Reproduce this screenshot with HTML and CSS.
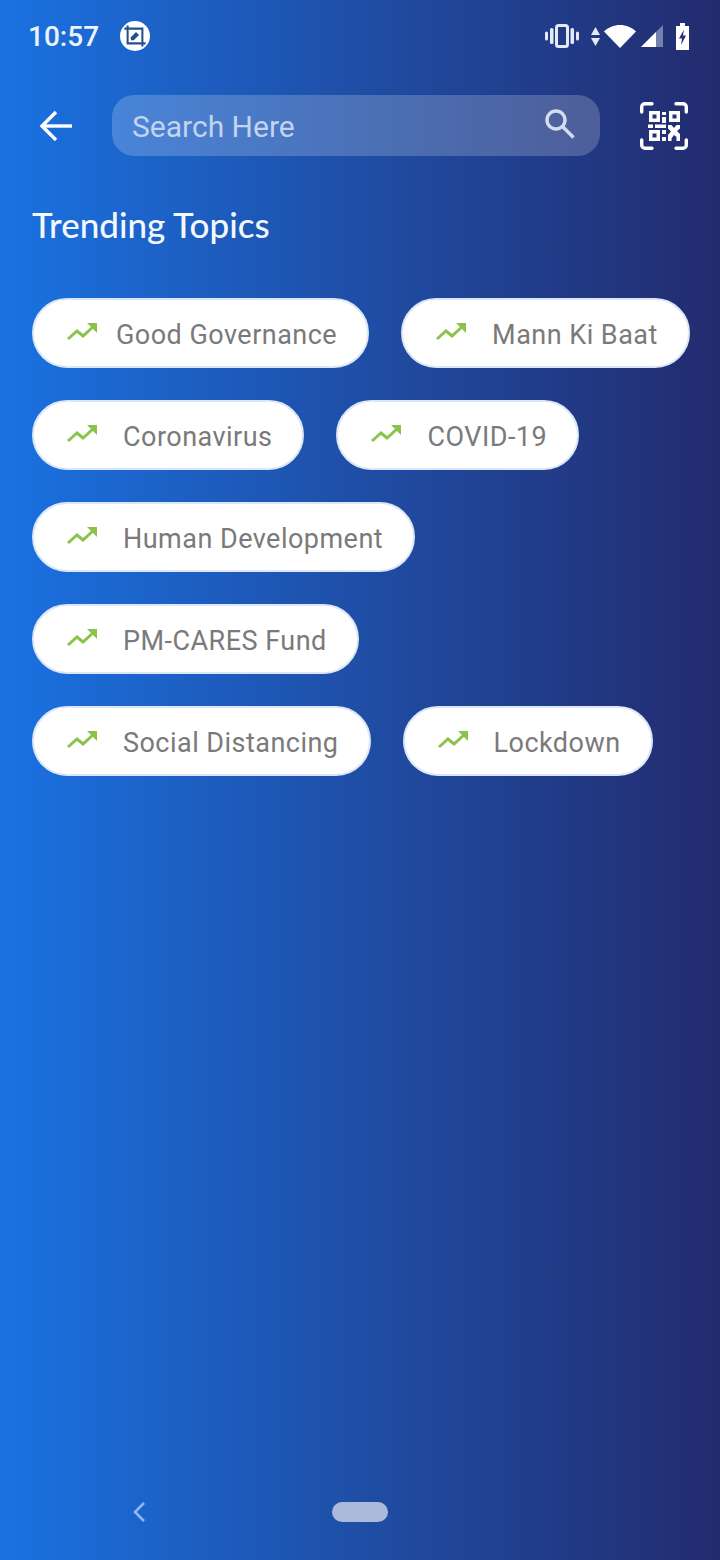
FILE: index.html
```html
<!DOCTYPE html>
<html lang="en">
<head>
<meta charset="UTF-8">
<meta name="viewport" content="width=device-width, initial-scale=1.0">
<title>Trending Topics</title>
<link rel="stylesheet" href="styles.css">
</head>
<body>
<div class="screen">
  <div class="status">
    <div class="status-left">
      <span class="time">10:57</span>
      <span class="notif">
        <svg width="24" height="24" viewBox="0 0 26 26" fill="none" stroke="#24508f" stroke-width="2.200">
          <path d="M5 1.500V21H24.500"/><path d="M1.500 5H21V24.500"/>
          <path d="M8.500 17.500v-3.200l5.600-5.600 3.200 3.200-5.600 5.600z" fill="#24508f" stroke="none"/>
        </svg>
      </span>
    </div>
    <div class="status-right">
      <svg width="34" height="24" viewBox="0 0 34 24" fill="#e4e9f5">
        <rect x="11.500" y="1.500" width="11" height="21" rx="2" fill="none" stroke="#e4e9f5" stroke-width="3"/>
        <rect x="5" y="4" width="3.500" height="16" rx="1.500"/>
        <rect x="25.500" y="4" width="3.500" height="16" rx="1.500"/>
        <rect x="0" y="7.500" width="3" height="9" rx="1.500"/>
        <rect x="31" y="7.500" width="3" height="9" rx="1.500"/>
      </svg>
      <svg class="ic-arrows" width="9" height="19" viewBox="0 0 9 19" fill="#e4e9f5">
        <path d="M4.500 0L9 8H0z"/><path d="M4.500 19L9 11H0z"/>
      </svg>
      <svg class="ic-wifi" width="32" height="23" viewBox="0 0 32 23" fill="#fff">
        <path d="M0 6.500C4 2.500 10 0 16 0s12 2.500 16 6.500L16 23z"/>
      </svg>
      <svg class="ic-signal" width="22" height="22" viewBox="0 0 22 22">
        <path d="M22 0v22H0z" fill="#7480ad"/>
        <path d="M15 7v15H0z" fill="#fff"/>
      </svg>
      <svg class="ic-batt" width="13" height="27" viewBox="0 0 13 27">
        <path d="M4 0h5v3h4v24H0V3h4z" fill="#fff"/>
        <path d="M8 6.500L3 15.500h3L5 22l5-9.500H7z" fill="#232e75"/>
      </svg>
    </div>
  </div>

  <div class="topbar">
    <svg class="back" width="34" height="32" viewBox="0 0 34 32" fill="none" stroke="#fff" stroke-width="3.400">
      <path d="M33 16H3"/><path d="M17 2L3 16l14 14"/>
    </svg>
    <div class="search">
      <span class="search-text">Search Here</span>
      <svg class="search-icon" width="32" height="32" viewBox="0 0 32 32" fill="none" stroke="#d5dcee" stroke-width="3.400">
        <circle cx="12" cy="12" r="9"/><path d="M18.500 18.500l11 11"/>
      </svg>
    </div>
    <svg class="qr" width="48" height="48" viewBox="0 0 48 48" fill="#fff">
      <g fill="none" stroke="#fff" stroke-width="3.400" stroke-linecap="round">
        <path d="M1.700 10V5a3.300 3.300 0 0 1 3.300-3.300H12"/>
        <path d="M36 1.700h7a3.300 3.300 0 0 1 3.300 3.300v5"/>
        <path d="M1.700 38v5a3.300 3.300 0 0 0 3.300 3.300H12"/>
        <path d="M36 46.300h7a3.300 3.300 0 0 0 3.300-3.300v-5"/>
      </g>
      <path fill-rule="evenodd" d="M9 9h11v11H9zM12.500 12.500v4h4v-4z"/>
      <path fill-rule="evenodd" d="M29 9h11v11H29zM32.500 12.500v4h4v-4z"/>
      <path fill-rule="evenodd" d="M9 28h11v11H9zM12.500 31.500v4h4v-4z"/>
      <rect x="22" y="10" width="4" height="3"/><rect x="22" y="15" width="4" height="6"/>
      <rect x="8" y="22.500" width="5" height="3.500"/><rect x="15" y="22.500" width="11" height="3.500"/>
      <rect x="22" y="28" width="4" height="4"/><rect x="22" y="35" width="4" height="4"/>
      <path d="M28 23h3.500l2.500 3 2.500-3H40v3.500l-3 2.500 3 3V39h-3.500v-4l-2.500-2-2.500 3.500V39H28v-6l3-3.500-3-3z"/>
    </svg>
  </div>

  <h1 class="heading">Trending Topics</h1>

  <div class="chips">
    <div class="chip-row">
      <div class="chip chip-tight"><svg class="trend" viewBox="0 0 30 20"><use href="#trend"/></svg>Good Governance</div>
      <div class="chip"><svg class="trend" viewBox="0 0 30 20"><use href="#trend"/></svg>Mann Ki Baat</div>
    </div>
    <div class="chip-row">
      <div class="chip"><svg class="trend" viewBox="0 0 30 20"><use href="#trend"/></svg>Coronavirus</div>
      <div class="chip"><svg class="trend" viewBox="0 0 30 20"><use href="#trend"/></svg>COVID-19</div>
    </div>
    <div class="chip-row">
      <div class="chip"><svg class="trend" viewBox="0 0 30 20"><use href="#trend"/></svg>Human Development</div>
    </div>
    <div class="chip-row">
      <div class="chip"><svg class="trend" viewBox="0 0 30 20"><use href="#trend"/></svg>PM-CARES Fund</div>
    </div>
    <div class="chip-row">
      <div class="chip"><svg class="trend" viewBox="0 0 30 20"><use href="#trend"/></svg>Social Distancing</div>
      <div class="chip"><svg class="trend" viewBox="0 0 30 20"><use href="#trend"/></svg>Lockdown</div>
    </div>
  </div>

  <div class="navbar">
    <svg class="nav-back" width="14" height="22" viewBox="0 0 14 22" fill="none" stroke="#8fb6f2" stroke-width="2.600">
      <path d="M12 2L3 11l9 9"/>
    </svg>
    <span class="nav-pill"></span>
  </div>
</div>

<svg width="0" height="0" class="defs">
  <symbol id="trend" viewBox="0 0 30 20">
    <path d="M1 17l9-8 6 5L27 4" fill="none" stroke="#8bc34a" stroke-width="3"/>
    <path d="M20 1h10v10z" fill="#8bc34a"/>
  </symbol>
</svg>
</body>
</html>
```

FILE: styles.css
```css
* {
  box-sizing: border-box;
}

html, body {
  margin: 0;
  padding: 0;
}

body {
  font-family: Roboto, "Liberation Sans", sans-serif;
}

.screen {
  width: 720px;
  height: 1560px;
  display: flex;
  flex-direction: column;
  background: linear-gradient(90deg, #1a72e2 0%, #1f4ea6 50%, #232b6e 100%);
  color: #fff;
}

.defs {
  display: block;
  height: 0;
}

/* status bar */
.status {
  height: 72px;
  padding: 0 28px;
  display: flex;
  align-items: center;
  justify-content: space-between;
}

.status-left {
  display: flex;
  align-items: center;
}

.time {
  font-size: 28px;
  font-weight: 500;
  color: #eef3fb;
}

.notif {
  width: 30px;
  height: 30px;
  margin-left: 21px;
  border-radius: 50%;
  background: #fff;
  display: flex;
  align-items: center;
  justify-content: center;
}

.status-right {
  display: flex;
  align-items: center;
  margin-right: 3px;
}

.ic-arrows {
  margin-left: 12px;
}

.ic-wifi {
  margin-left: 4px;
}

.ic-signal {
  margin-left: 5px;
}

.ic-batt {
  margin-left: 13px;
}

/* search row */
.topbar {
  height: 61px;
  margin-top: 23px;
  padding: 0 32px 0 39px;
  display: flex;
  align-items: center;
}

.back {
  flex: none;
}

.search {
  width: 488px;
  height: 61px;
  margin-left: 39px;
  margin-right: 40px;
  padding: 0 24px 0 20px;
  border-radius: 22px;
  background: rgba(255, 255, 255, 0.2);
  display: flex;
  align-items: center;
  justify-content: space-between;
  flex: none;
}

.search-text {
  padding-top: 2px;
  font-size: 30px;
  color: #c3d3f0;
}

.search-icon {
  margin-top: -3px;
}

.qr {
  flex: none;
}

.heading {
  margin: 45px 0 0 32px;
  font-family: Lato, sans-serif;
  font-size: 35px;
  line-height: 46px;
  font-weight: 500;
  color: #f4f8fe;
}

/* topic chips */
.chips {
  margin-top: 51px;
  padding: 0 31px 0 32px;
  display: flex;
  flex-direction: column;
  gap: 32px;
}

.chip-row {
  display: flex;
  gap: 32px;
}

.chip {
  height: 70px;
  padding: 4px 30px 0 33px;
  border-radius: 35px;
  border: 2px solid #dbe6f7;
  background: #fff;
  display: flex;
  align-items: center;
  font-size: 27px;
  letter-spacing: 0.47px;
  color: #7a7a7a;
  white-space: nowrap;
}

.trend {
  width: 30px;
  height: 20px;
  margin-right: 26px;
  margin-top: -6px;
  flex: none;
}

.chip-tight .trend {
  margin-right: 19px;
}

/* nav bar */
.navbar {
  margin-top: auto;
  height: 96px;
  padding-left: 132px;
  display: flex;
  align-items: center;
}

.nav-pill {
  width: 56px;
  height: 20px;
  margin-left: 186px;
  border-radius: 10px;
  background: #aab9dc;
}
```
